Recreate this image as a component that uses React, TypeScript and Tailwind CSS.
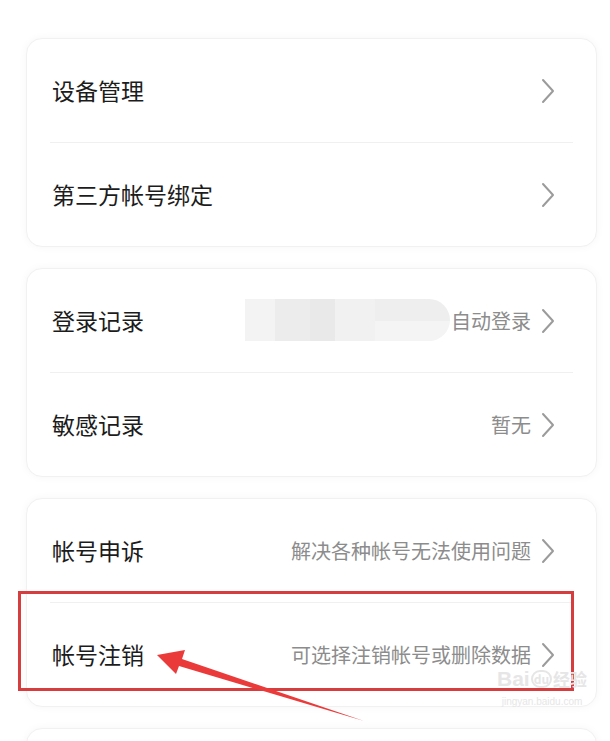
import React from 'react';

type Row = { title: string; value?: string; blur?: boolean };

const groups: Row[][] = [
  [{ title: '设备管理' }, { title: '第三方帐号绑定' }],
  [{ title: '登录记录', value: '自动登录', blur: true }, { title: '敏感记录', value: '暂无' }],
  [{ title: '帐号申诉', value: '解决各种帐号无法使用问题' }, { title: '帐号注销', value: '可选择注销帐号或删除数据' }],
];

const Chevron = () => (
  <svg width="14" height="26" viewBox="0 0 14 26" className="shrink-0">
    <polyline points="2,2 12,13 2,24" fill="none" stroke="#9b9b9b" strokeWidth="2" strokeLinecap="round" strokeLinejoin="round" />
  </svg>
);

const Blurred = () => (
  <div className="absolute left-[218px] top-[30px] flex h-[42px] w-[205px] overflow-hidden rounded-r-[21px]">
    <div className="w-[30px] bg-[#f3f3f3]" />
    <div className="w-[35px] bg-[#ececec]" />
    <div className="w-[25px] bg-[#e9e9e9]" />
    <div className="w-[40px] bg-[#f1f1f1]" />
    <div className="flex w-[75px] flex-col">
      <div className="h-[22px] bg-[#eeeeee]" />
      <div className="h-[20px] bg-[#f4f4f4]" />
    </div>
  </div>
);

const Card = ({ rows }: { rows: Row[] }) => (
  <div className="ml-[26px] mr-[13px] rounded-[16px] border border-[#f1f1f1] bg-white shadow-[0_0_8px_rgba(0,0,0,0.04)]">
    {rows.map((r, i) => (
      <div key={r.title}>
        {i > 0 && <div className="mx-[23px] h-px bg-[#f0f0f0]" />}
        <div className="relative flex h-[103px] items-center pl-[25px] pr-[41px]">
          <span className="text-[23px] text-[#1c1c1c]">{r.title}</span>
          {r.blur && <Blurred />}
          <div className="relative ml-auto flex items-center gap-[10px]">
            {r.value && <span className="text-[20px] text-[#8c8c8c]">{r.value}</span>}
            <Chevron />
          </div>
        </div>
      </div>
    ))}
  </div>
);

export default function App() {
  return (
    <div
      className="relative h-[741px] w-[610px] overflow-hidden bg-white pt-[38px]"
      style={{ fontFamily: '"Noto Sans CJK SC", "Noto Sans", sans-serif' }}
    >
      <div className="flex flex-col gap-[21px]">
        {groups.map((g, i) => (
          <Card key={i} rows={g} />
        ))}
        <Card rows={[{ title: ' ' }]} />
      </div>

      {/* highlight box */}
      <div className="absolute left-[18px] top-[591px] h-[100px] w-[556px] border-[3px] border-[#d63d3f]" />

      {/* arrow */}
      <svg className="absolute left-0 top-0" width="610" height="741" viewBox="0 0 610 741">
        <polygon points="157,655 185,650 182,659 364,721 179,666 176,674" fill="#ea3b3a" />
      </svg>

      {/* watermark */}
      <div className="absolute left-[497px] top-[668px] flex flex-col items-center whitespace-nowrap text-[#e6e6e6]">
        <div className="flex items-center leading-none">
          <span className="text-[21px] font-bold" style={{ fontFamily: '"Liberation Sans", sans-serif' }}>Bai</span>
          <span className="mx-[1px] rounded-full border-2 border-[#e6e6e6] px-[1px] text-[12px] font-bold leading-[14px]">du</span>
          <span className="text-[17px] font-bold">经验</span>
        </div>
        <span className="mt-[8px] text-[10px] leading-none" style={{ fontFamily: '"Liberation Sans", sans-serif' }}>jingyan.baidu.com</span>
      </div>
    </div>
  );
}
